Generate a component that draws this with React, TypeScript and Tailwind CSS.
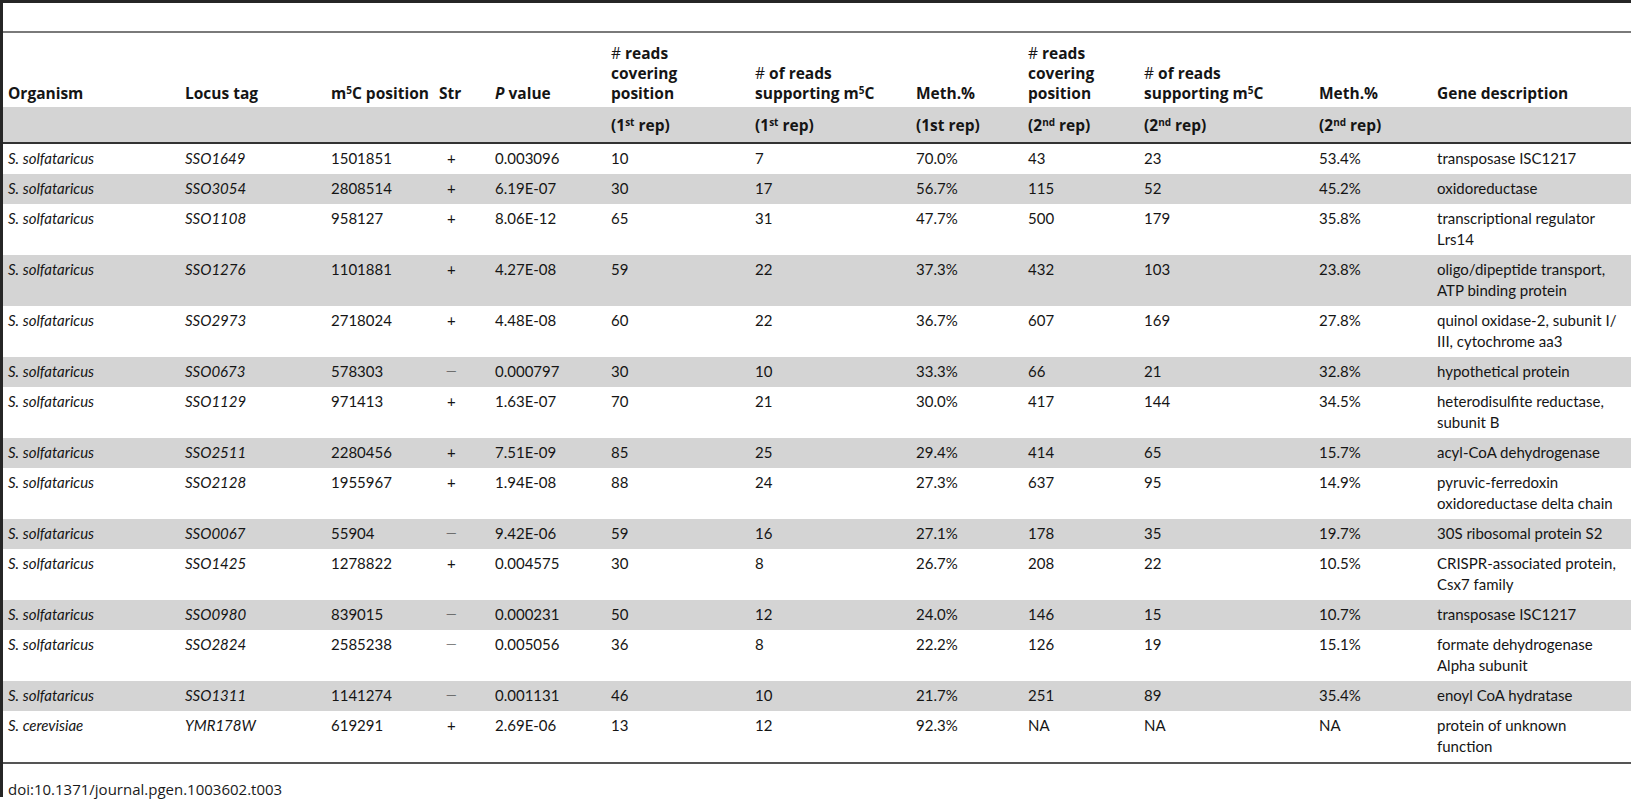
const cols =
  "grid grid-cols-[177px_146px_108px_56px_116px_144px_161px_112px_116px_175px_118px_240px]";

type Row = {
  org: string;
  tag: string;
  pos: string;
  str: string;
  p: string;
  cov1: string;
  sup1: string;
  meth1: string;
  cov2: string;
  sup2: string;
  meth2: string;
  desc: string[];
};

const rows: Row[] = [
  { org: "S. solfataricus", tag: "SSO1649", pos: "1501851", str: "+", p: "0.003096", cov1: "10", sup1: "7", meth1: "70.0%", cov2: "43", sup2: "23", meth2: "53.4%", desc: ["transposase ISC1217"] },
  { org: "S. solfataricus", tag: "SSO3054", pos: "2808514", str: "+", p: "6.19E-07", cov1: "30", sup1: "17", meth1: "56.7%", cov2: "115", sup2: "52", meth2: "45.2%", desc: ["oxidoreductase"] },
  { org: "S. solfataricus", tag: "SSO1108", pos: "958127", str: "+", p: "8.06E-12", cov1: "65", sup1: "31", meth1: "47.7%", cov2: "500", sup2: "179", meth2: "35.8%", desc: ["transcriptional regulator", "Lrs14"] },
  { org: "S. solfataricus", tag: "SSO1276", pos: "1101881", str: "+", p: "4.27E-08", cov1: "59", sup1: "22", meth1: "37.3%", cov2: "432", sup2: "103", meth2: "23.8%", desc: ["oligo/dipeptide transport,", "ATP binding protein"] },
  { org: "S. solfataricus", tag: "SSO2973", pos: "2718024", str: "+", p: "4.48E-08", cov1: "60", sup1: "22", meth1: "36.7%", cov2: "607", sup2: "169", meth2: "27.8%", desc: ["quinol oxidase-2, subunit I/", "III, cytochrome aa3"] },
  { org: "S. solfataricus", tag: "SSO0673", pos: "578303", str: "\u2212", p: "0.000797", cov1: "30", sup1: "10", meth1: "33.3%", cov2: "66", sup2: "21", meth2: "32.8%", desc: ["hypothetical protein"] },
  { org: "S. solfataricus", tag: "SSO1129", pos: "971413", str: "+", p: "1.63E-07", cov1: "70", sup1: "21", meth1: "30.0%", cov2: "417", sup2: "144", meth2: "34.5%", desc: ["heterodisulfite reductase,", "subunit B"] },
  { org: "S. solfataricus", tag: "SSO2511", pos: "2280456", str: "+", p: "7.51E-09", cov1: "85", sup1: "25", meth1: "29.4%", cov2: "414", sup2: "65", meth2: "15.7%", desc: ["acyl-CoA dehydrogenase"] },
  { org: "S. solfataricus", tag: "SSO2128", pos: "1955967", str: "+", p: "1.94E-08", cov1: "88", sup1: "24", meth1: "27.3%", cov2: "637", sup2: "95", meth2: "14.9%", desc: ["pyruvic-ferredoxin", "oxidoreductase delta chain"] },
  { org: "S. solfataricus", tag: "SSO0067", pos: "55904", str: "\u2212", p: "9.42E-06", cov1: "59", sup1: "16", meth1: "27.1%", cov2: "178", sup2: "35", meth2: "19.7%", desc: ["30S ribosomal protein S2"] },
  { org: "S. solfataricus", tag: "SSO1425", pos: "1278822", str: "+", p: "0.004575", cov1: "30", sup1: "8", meth1: "26.7%", cov2: "208", sup2: "22", meth2: "10.5%", desc: ["CRISPR-associated protein,", "Csx7 family"] },
  { org: "S. solfataricus", tag: "SSO0980", pos: "839015", str: "\u2212", p: "0.000231", cov1: "50", sup1: "12", meth1: "24.0%", cov2: "146", sup2: "15", meth2: "10.7%", desc: ["transposase ISC1217"] },
  { org: "S. solfataricus", tag: "SSO2824", pos: "2585238", str: "\u2212", p: "0.005056", cov1: "36", sup1: "8", meth1: "22.2%", cov2: "126", sup2: "19", meth2: "15.1%", desc: ["formate dehydrogenase", "Alpha subunit"] },
  { org: "S. solfataricus", tag: "SSO1311", pos: "1141274", str: "\u2212", p: "0.001131", cov1: "46", sup1: "10", meth1: "21.7%", cov2: "251", sup2: "89", meth2: "35.4%", desc: ["enoyl CoA hydratase"] },
  { org: "S. cerevisiae", tag: "YMR178W", pos: "619291", str: "+", p: "2.69E-06", cov1: "13", sup1: "12", meth1: "92.3%", cov2: "NA", sup2: "NA", meth2: "NA", desc: ["protein of unknown", "function"] },
];

function Hash() {
  return <span className="font-normal">#</span>;
}

export default function App() {
  return (
    <div className="w-[1631px] h-[800px] overflow-hidden bg-white text-[#151515]">
      <div className="h-[797px] border-t-[3px] border-l-[3px] border-[#262626] pl-[5px]">
        <div className="-ml-[5px] mt-[28px] border-t-2 border-[#7a7a7a]" />

        <div className="-ml-[5px] pl-[5px] font-['Open_Sans',sans-serif] font-bold text-[15.5px] leading-[20px]">
          {/* header titles */}
          <div className={`${cols} h-[74px] items-end pb-[4px]`}>
            <div>Organism</div>
            <div>Locus tag</div>
            <div className="whitespace-nowrap">
              m<sup className="text-[10px]">5</sup>C position
            </div>
            <div>Str</div>
            <div>
              <i>P</i> value
            </div>
            <div>
              <Hash /> reads
              <br />
              covering
              <br />
              position
            </div>
            <div className="whitespace-nowrap">
              <Hash /> of reads
              <br />
              supporting m<sup className="text-[10px]">5</sup>C
            </div>
            <div>Meth.%</div>
            <div>
              <Hash /> reads
              <br />
              covering
              <br />
              position
            </div>
            <div className="whitespace-nowrap">
              <Hash /> of reads
              <br />
              supporting m<sup className="text-[10px]">5</sup>C
            </div>
            <div>Meth.%</div>
            <div className="whitespace-nowrap">Gene description</div>
          </div>

          {/* header replicate band */}
          <div className={`${cols} -ml-[5px] pl-[5px] h-[37px] items-center bg-[#d4d4d4] border-b-2 border-[#333]`}>
            <div />
            <div />
            <div />
            <div />
            <div />
            <div>
              (1<sup className="text-[10px]">st</sup> rep)
            </div>
            <div>
              (1<sup className="text-[10px]">st</sup> rep)
            </div>
            <div>(1st rep)</div>
            <div>
              (2<sup className="text-[10px]">nd</sup> rep)
            </div>
            <div>
              (2<sup className="text-[10px]">nd</sup> rep)
            </div>
            <div>
              (2<sup className="text-[10px]">nd</sup> rep)
            </div>
            <div />
          </div>
        </div>

        {/* body */}
        <div className="-ml-[5px] font-['Lato',sans-serif] text-[15px] leading-[21px]">
          {rows.map((r, i) => (
            <div
              key={r.tag}
              className={`${cols} pl-[5px] pt-[4px] pb-[5px] ${i % 2 === 1 ? "bg-[#d4d4d4]" : "bg-white"}`}
            >
              <div className="italic">{r.org}</div>
              <div className="italic">{r.tag}</div>
              <div>{r.pos}</div>
              {r.str === "+" ? (
                <div className="pl-[8px]">+</div>
              ) : (
                <div className="pl-[6px] font-['DejaVu_Sans',sans-serif] font-light">{r.str}</div>
              )}
              <div>{r.p}</div>
              <div>{r.cov1}</div>
              <div>{r.sup1}</div>
              <div>{r.meth1}</div>
              <div>{r.cov2}</div>
              <div>{r.sup2}</div>
              <div>{r.meth2}</div>
              <div className="whitespace-nowrap">
                {r.desc.map((line) => (
                  <div key={line}>{line}</div>
                ))}
              </div>
            </div>
          ))}
          <div className="border-t-2 border-[#555]" />
        </div>

        <div className="mt-[15px] font-['Open_Sans',sans-serif] text-[15px] leading-[20px] text-[#1a1a1a]">
          doi:10.1371/journal.pgen.1003602.t003
        </div>
      </div>
    </div>
  );
}
